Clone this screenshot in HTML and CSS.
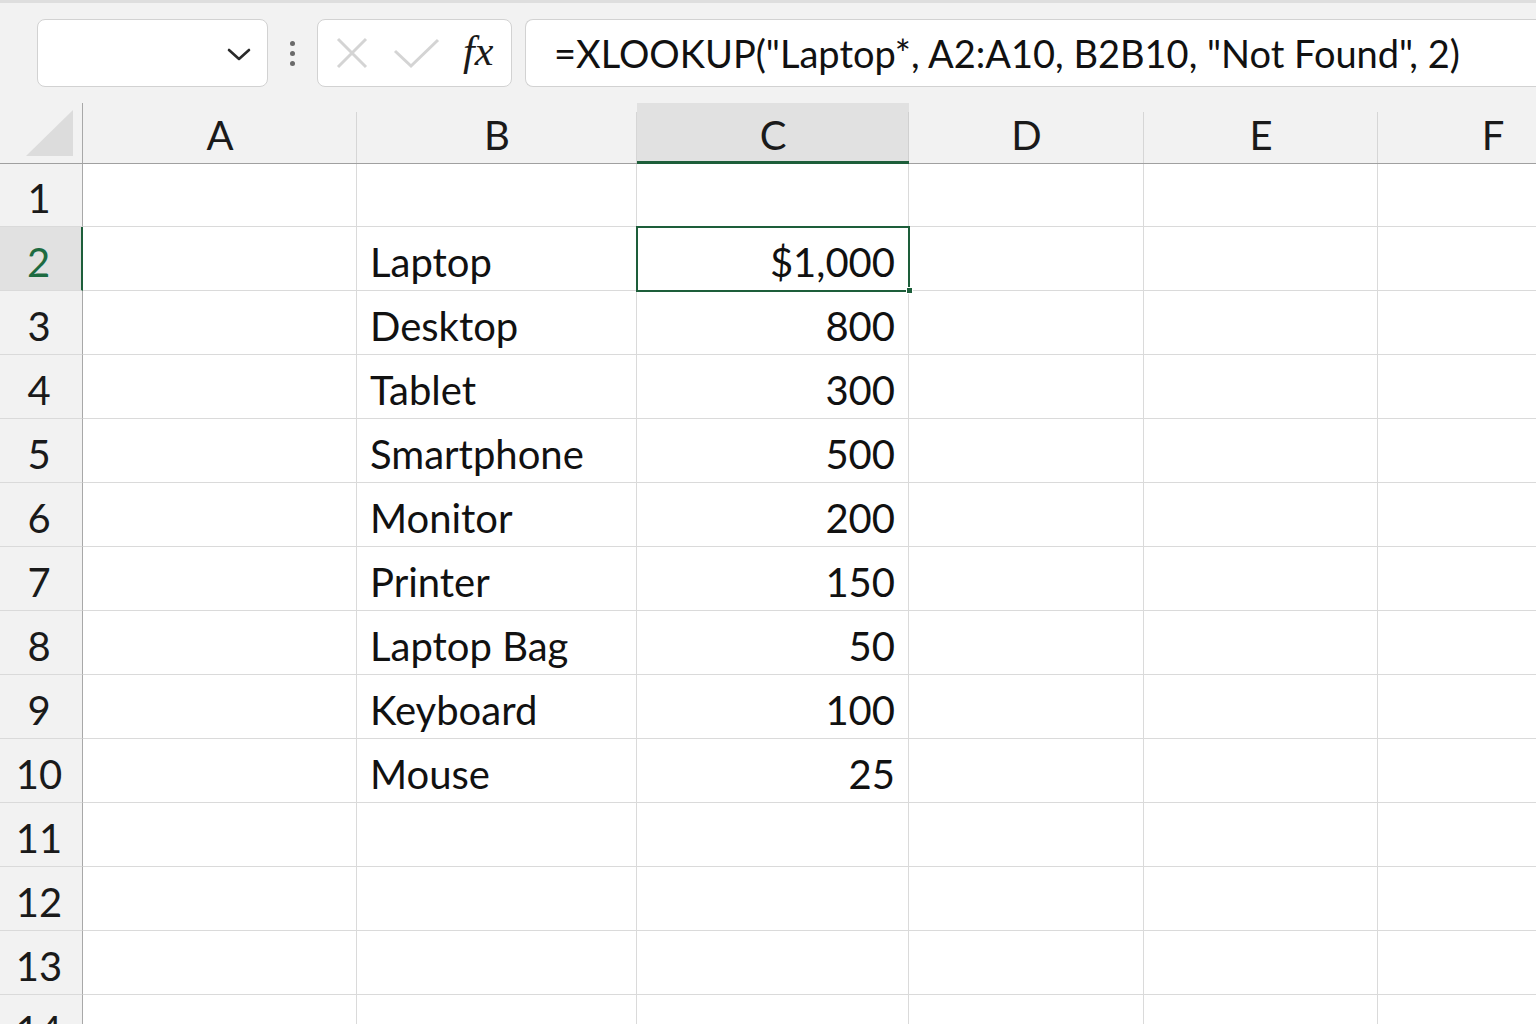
FILE: index.html
```html
<!DOCTYPE html>
<html>
<head>
<meta charset="utf-8">
<link rel="stylesheet" href="styles.css">
</head>
<body>
<div class="app">
  <div class="toolbar">
    <div class="namebox">
      <svg class="chev" width="24" height="14" viewBox="0 0 24 14"><path d="M2 2 L12 11 L22 2" fill="none" stroke="#2a2a2a" stroke-width="2.6" stroke-linecap="round" stroke-linejoin="round"/></svg>
    </div>
    <div class="dots"><span></span><span></span><span></span></div>
    <div class="fbtns">
      <svg width="34" height="34" viewBox="0 0 34 34"><path d="M3 3 L31 31 M31 3 L3 31" stroke="#d4d4d4" stroke-width="3" fill="none"/></svg>
      <svg width="48" height="32" viewBox="0 0 48 32"><path d="M2 14 L18 29 L45 3" stroke="#d4d4d4" stroke-width="3" fill="none"/></svg>
      <span class="fx">fx</span>
    </div>
    <div class="formula">=XLOOKUP("Laptop*, A2:A10, B2B10, "Not Found", 2)</div>
  </div>
  <div class="sheet">
    <div class="corner"><svg width="50" height="48" viewBox="0 0 50 48"><path d="M0 46 L47 0 L47 46 Z" fill="#dcdcdc"/></svg></div>
    <div class="ch">A</div>
    <div class="ch">B</div>
    <div class="ch ch-active">C</div>
    <div class="ch">D</div>
    <div class="ch">E</div>
    <div class="ch ch-last">F</div>

    <div class="rh r1">1</div><div class="c r1"></div><div class="c r1"></div><div class="c r1"></div><div class="c r1"></div><div class="c r1"></div><div class="c r1 last"></div>

    <div class="rh rh-active">2</div><div class="c"></div><div class="c txt">Laptop</div><div class="c num sel">$1,000<span class="handle"></span></div><div class="c"></div><div class="c"></div><div class="c last"></div>
    <div class="rh">3</div><div class="c"></div><div class="c txt">Desktop</div><div class="c num">800</div><div class="c"></div><div class="c"></div><div class="c last"></div>
    <div class="rh">4</div><div class="c"></div><div class="c txt">Tablet</div><div class="c num">300</div><div class="c"></div><div class="c"></div><div class="c last"></div>
    <div class="rh">5</div><div class="c"></div><div class="c txt">Smartphone</div><div class="c num">500</div><div class="c"></div><div class="c"></div><div class="c last"></div>
    <div class="rh">6</div><div class="c"></div><div class="c txt">Monitor</div><div class="c num">200</div><div class="c"></div><div class="c"></div><div class="c last"></div>
    <div class="rh">7</div><div class="c"></div><div class="c txt">Printer</div><div class="c num">150</div><div class="c"></div><div class="c"></div><div class="c last"></div>
    <div class="rh">8</div><div class="c"></div><div class="c txt">Laptop Bag</div><div class="c num">50</div><div class="c"></div><div class="c"></div><div class="c last"></div>
    <div class="rh">9</div><div class="c"></div><div class="c txt">Keyboard</div><div class="c num">100</div><div class="c"></div><div class="c"></div><div class="c last"></div>
    <div class="rh">10</div><div class="c"></div><div class="c txt">Mouse</div><div class="c num">25</div><div class="c"></div><div class="c"></div><div class="c last"></div>
    <div class="rh">11</div><div class="c"></div><div class="c"></div><div class="c"></div><div class="c"></div><div class="c"></div><div class="c last"></div>
    <div class="rh">12</div><div class="c"></div><div class="c"></div><div class="c"></div><div class="c"></div><div class="c"></div><div class="c last"></div>
    <div class="rh">13</div><div class="c"></div><div class="c"></div><div class="c"></div><div class="c"></div><div class="c"></div><div class="c last"></div>
    <div class="rh">14</div><div class="c"></div><div class="c"></div><div class="c"></div><div class="c"></div><div class="c"></div><div class="c last"></div>
  </div>
</div>
</body>
</html>
```
FILE: styles.css
```css
* { box-sizing: border-box; }
html, body { margin: 0; padding: 0; }
body {
  width: 1536px;
  height: 1024px;
  overflow: hidden;
  background: #ffffff;
  font-family: Lato, "Open Sans", sans-serif;
  color: #111;
}
.app { width: 1536px; height: 1024px; overflow: hidden; }

.toolbar {
  height: 103px;
  background: #f2f2f2;
  border-top: 3px solid #dedede;
  display: flex;
  align-items: flex-start;
  padding: 16px 0 0 37px;
}
.namebox {
  width: 231px;
  height: 68px;
  background: #fff;
  border: 1px solid #d2d2d2;
  border-radius: 8px;
  display: flex;
  align-items: center;
  justify-content: flex-end;
  padding-right: 16px;
}
.chev { margin-top: 4px; }
.dots {
  width: 49px;
  height: 68px;
  display: flex;
  flex-direction: column;
  align-items: center;
  justify-content: center;
  gap: 5px;
}
.dots span {
  width: 5px; height: 5px; border-radius: 50%;
  background: #6a6a6a;
}
.fbtns {
  width: 195px;
  height: 68px;
  background: #fff;
  border: 1px solid #d2d2d2;
  border-radius: 8px;
  display: flex;
  align-items: center;
  padding-left: 17px;
  gap: 0;
}
.fbtns svg:nth-child(2) { margin-left: 24px; }
.fx {
  font-family: "Liberation Serif", "DejaVu Serif", serif;
  font-style: italic;
  font-size: 42px;
  margin-left: 22px;
  color: #1a1a1a;
  line-height: 1;
  margin-top: -4px;
}
.formula {
  margin-left: 13px;
  flex: 1;
  height: 68px;
  background: #fff;
  border: 1px solid #d2d2d2;
  border-right: none;
  border-radius: 8px 0 0 8px;
  font-size: 38px;
  line-height: 66px;
  padding-left: 28px;
  white-space: nowrap;
  color: #111;
  letter-spacing: 0px;
}

.sheet {
  display: grid;
  width: 1536px;
  overflow: hidden;
  grid-template-columns: 83px 274px 280px 272px 235px 234px 230px;
  grid-template-rows: 61px 63px repeat(13, 64px);
}
.corner {
  background: #f2f2f2;
  border-right: 1px solid #a8a8a8;
  border-bottom: 1px solid #a0a0a0;
  display: flex;
  align-items: flex-end;
  justify-content: flex-end;
  padding: 0 6px 5px 0;
}
.ch {
  background: #f2f2f2;
  border-bottom: 1px solid #a0a0a0;
  font-size: 40px;
  text-align: center;
  line-height: 60px;
  padding-top: 2px;
  position: relative;
  color: #1a1a1a;
}
.ch::after {
  content: "";
  position: absolute;
  right: 0; top: 9px; bottom: 0;
  width: 1px;
  background: #d6d6d6;
}
.ch-last::after { display: none; }
.ch-active {
  background: #e1e1e1;
  border-bottom: 3px solid #1d5e3a;
}
.ch-active::after { background: #d0d0d0; }

.rh {
  background: #f2f2f2;
  border-right: 1px solid #a8a8a8;
  border-bottom: 1px solid #dadada;
  font-size: 40px;
  text-align: center;
  line-height: 64px;
  padding-top: 3px;
  padding-right: 4px;
  color: #1a1a1a;
}
.rh.r1 { line-height: 63px; }
.rh-active {
  background: #e1e1e1;
  color: #1d6b41;
  border-right: 2px solid #1d5e3a;
}
.c {
  border-right: 1px solid #dadada;
  border-bottom: 1px solid #dadada;
  font-size: 40px;
  line-height: 64px;
  padding-top: 3px;
  white-space: nowrap;
  color: #111;
}
.c.r1 { line-height: 63px; }
.c.last { border-right: none; }
.txt { padding-left: 13px; }
.num { text-align: right; padding-right: 13px; }
.sel {
  position: relative;
  outline: 2px solid #1d5e3a;
  outline-offset: -1px;
  z-index: 2;
}
.handle {
  position: absolute;
  right: -5px;
  bottom: -4px;
  width: 7px;
  height: 7px;
  background: #1d5e3a;
  border: 1px solid #fff;
}
```
